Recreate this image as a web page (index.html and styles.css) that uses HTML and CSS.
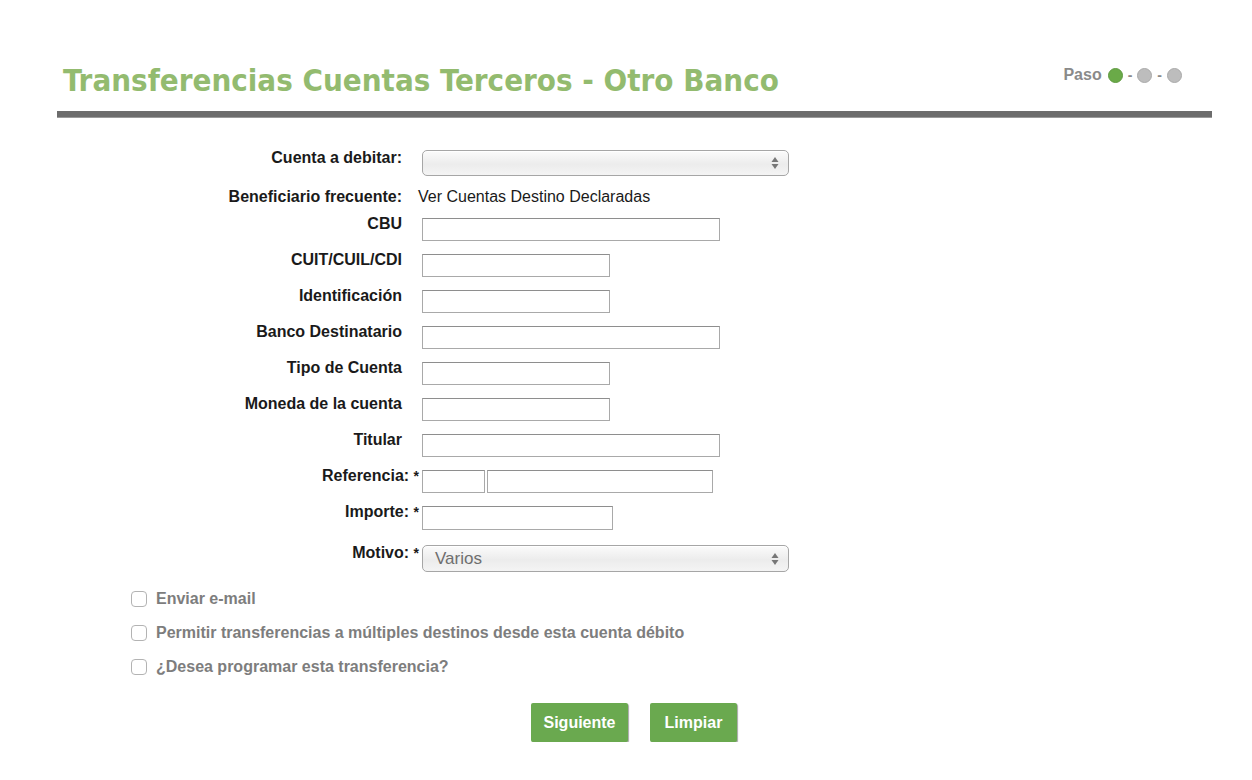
FILE: index.html
```html
<!DOCTYPE html>
<html lang="es">
<head>
<meta charset="utf-8">
<title>Transferencias Cuentas Terceros - Otro Banco</title>
<link rel="stylesheet" href="styles.css">
</head>
<body>
<div class="page">
  <header class="head">
    <h1 class="title">Transferencias Cuentas Terceros - Otro Banco</h1>
    <div class="steps">
      <span class="steps-label">Paso</span>
      <span class="dot dot-on"></span>
      <span class="dash">-</span>
      <span class="dot"></span>
      <span class="dash">-</span>
      <span class="dot"></span>
    </div>
  </header>
  <div class="rule"></div>

  <form class="form">
    <label class="lbl lbl-select">Cuenta a debitar:</label>
    <div class="select select-wide">
      <span class="select-text"></span>
      <svg class="arrows" width="8" height="14" viewBox="0 0 8 14"><path d="M4 1 L7.5 6 H0.5 Z" fill="#777"/><path d="M4 13 L7.5 8 H0.5 Z" fill="#777"/></svg>
    </div>

    <label class="lbl lbl-text">Beneficiario frecuente:</label>
    <span class="plain">Ver Cuentas Destino Declaradas</span>

    <label class="lbl">CBU</label>
    <input class="field field-l" type="text">

    <label class="lbl">CUIT/CUIL/CDI</label>
    <input class="field field-m" type="text">

    <label class="lbl">Identificación</label>
    <input class="field field-m" type="text">

    <label class="lbl">Banco Destinatario</label>
    <input class="field field-l" type="text">

    <label class="lbl">Tipo de Cuenta</label>
    <input class="field field-m" type="text">

    <label class="lbl">Moneda de la cuenta</label>
    <input class="field field-m" type="text">

    <label class="lbl">Titular</label>
    <input class="field field-l" type="text">

    <label class="lbl lbl-req">Referencia: <span class="req">*</span></label>
    <div class="pair">
      <input class="field field-xs" type="text">
      <input class="field field-ref" type="text">
    </div>

    <label class="lbl lbl-req">Importe: <span class="req">*</span></label>
    <input class="field field-imp" type="text">

    <label class="lbl lbl-req lbl-select lbl-motivo">Motivo: <span class="req">*</span></label>
    <div class="select select-wide select-motivo">
      <span class="select-text">Varios</span>
      <svg class="arrows" width="8" height="14" viewBox="0 0 8 14"><path d="M4 1 L7.5 6 H0.5 Z" fill="#777"/><path d="M4 13 L7.5 8 H0.5 Z" fill="#777"/></svg>
    </div>
  </form>

  <div class="checks">
    <label class="check"><span class="box"></span>Enviar e-mail</label>
    <label class="check"><span class="box"></span>Permitir transferencias a múltiples destinos desde esta cuenta débito</label>
    <label class="check"><span class="box"></span>¿Desea programar esta transferencia?</label>
  </div>

  <div class="actions">
    <button class="btn btn-next" type="button">Siguiente</button>
    <button class="btn btn-clear" type="button">Limpiar</button>
  </div>
</div>
</body>
</html>
```

FILE: styles.css
```css
html, body {
  margin: 0;
  padding: 0;
  background: #ffffff;
}

body {
  font-family: "Liberation Sans", Arial, sans-serif;
  color: #1a1a1a;
}

.page {
  width: 1155px;
  margin-left: 57px;
  padding-top: 58px;
}

.head {
  display: flex;
  justify-content: space-between;
  align-items: flex-start;
}

.title {
  margin: 0 0 0 6px;
  font-family: "DejaVu Sans", sans-serif;
  font-stretch: condensed;
  font-weight: bold;
  font-size: 31px;
  line-height: 44px;
  color: #93bb6f;
}

.steps {
  display: flex;
  align-items: center;
  gap: 5px;
  margin-top: 8px;
  margin-right: 30px;
  font-weight: bold;
  font-size: 16px;
  color: #8a8a8a;
}

.steps-label {
  margin-right: 1px;
}

.dot {
  width: 15px;
  height: 15px;
  border-radius: 50%;
  background: #bdbdbd;
  border: 1px solid #aaaaaa;
  box-sizing: border-box;
}

.dot-on {
  background: #6aaa48;
  border-color: #5f9a40;
}

.dash {
  font-size: 14px;
  color: #8a8a8a;
}

.rule {
  height: 7px;
  margin-top: 9px;
  background: #6c6c6c;
  border-bottom: 1px solid #9a9a9a;
  box-sizing: border-box;
}

.form {
  display: grid;
  grid-template-columns: 345px 1fr;
  column-gap: 20px;
  row-gap: 13px;
  margin-top: 32px;
  align-items: start;
}

.lbl {
  text-align: right;
  font-weight: bold;
  font-size: 16px;
  line-height: 17px;
  margin-top: -3px;
  color: #1a1a1a;
  white-space: nowrap;
}

.lbl-select {
  margin-top: -1px;
}

.lbl-text {
  margin-top: 0;
  line-height: 16px;
}

.lbl-req {
  margin-right: -17px;
}

.lbl-motivo {
  margin-top: 1px;
}

.req {
  font-size: 14px;
}

.plain {
  font-size: 16px;
  line-height: 16px;
  margin-left: -4px;
  color: #1a1a1a;
}

.field {
  display: block;
  height: 23px;
  box-sizing: border-box;
  border: 1px solid #a9a9a9;
  border-top-color: #8e8e8e;
  background: #ffffff;
  margin: 0;
  padding: 0 4px;
  font: 15px "Liberation Sans", Arial, sans-serif;
}

.field-l { width: 298px; }
.field-m { width: 188px; }
.field-xs { width: 63px; }
.field-ref { width: 226px; }
.field-imp { width: 191px; height: 24px; }

.pair {
  display: flex;
  gap: 2px;
}

.select {
  display: flex;
  align-items: center;
  justify-content: space-between;
  box-sizing: border-box;
  height: 26px;
  border: 1px solid #a6a6a6;
  border-radius: 5px;
  background: linear-gradient(#fbfbfb, #ececec 55%, #f4f4f4);
  box-shadow: inset 0 1px 0 #ffffff;
  padding: 0 9px 0 12px;
}

.select-wide { width: 367px; }

.select-motivo {
  height: 27px;
  margin-top: 2px;
}

.select-text {
  font-size: 17px;
  color: #6e6e6e;
}

.arrows {
  display: block;
}

.checks {
  display: flex;
  flex-direction: column;
  gap: 16px;
  margin-top: 18px;
  margin-left: 74px;
}

.check {
  display: flex;
  align-items: center;
  gap: 9px;
  font-weight: bold;
  font-size: 16px;
  line-height: 18px;
  color: #7d7d7d;
}

.box {
  width: 16px;
  height: 16px;
  box-sizing: border-box;
  border: 1px solid #b3b3b3;
  border-radius: 4px;
  background: #ffffff;
}

.actions {
  display: flex;
  gap: 22px;
  margin-top: 27px;
  margin-left: 474px;
}

.btn {
  height: 39px;
  border: none;
  border-radius: 2px;
  background: #6aa94f;
  color: #ffffff;
  font-family: "Liberation Sans", Arial, sans-serif;
  font-weight: bold;
  font-size: 16px;
  padding: 0;
  box-shadow: 1px 1px 1px rgba(0, 0, 0, 0.35);
}

.btn-next { width: 97px; }
.btn-clear { width: 87px; }
```
